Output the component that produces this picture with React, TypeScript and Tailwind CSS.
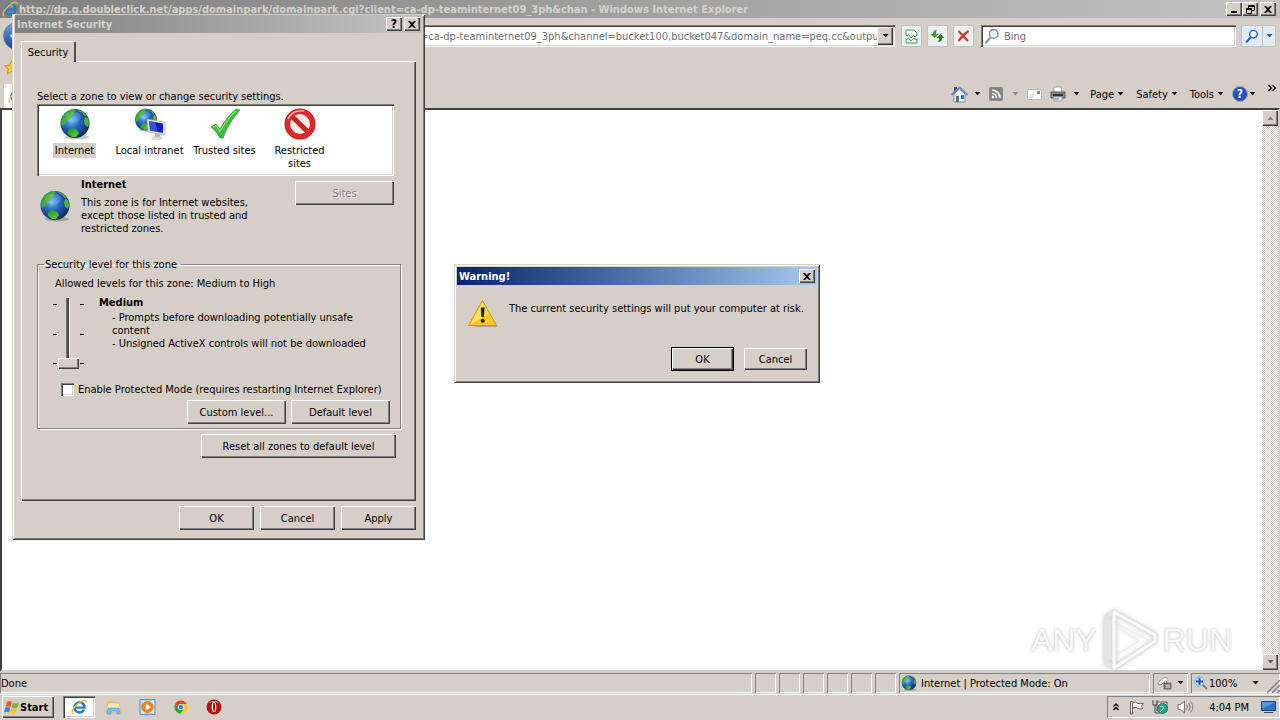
import type { ReactNode } from "react";

const raised =
  "bg-[#d6cfc8] shadow-[inset_1px_1px_0_#fff,inset_-1px_-1px_0_#404040,inset_-2px_-2px_0_#808080]";
const sunken =
  "bg-white shadow-[inset_1px_1px_0_#808080,inset_2px_2px_0_#404040,inset_-1px_-1px_0_#fff,inset_-2px_-2px_0_#d6cfc8]";
const pane = "shadow-[inset_1px_1px_0_#808080,inset_-1px_-1px_0_#fff]";

function Button({ children, className = "", disabled = false }: { children: ReactNode; className?: string; disabled?: boolean }) {
  return (
    <button
      type="button"
      disabled={disabled}
      className={`flex h-6 items-center justify-center disabled:text-[#808080] disabled:[text-shadow:1px_1px_0_#fff] ${raised} ${className}`}
    >
      {children}
    </button>
  );
}

function Caption({ label, children }: { label: string; children: ReactNode }) {
  return (
    <button type="button" aria-label={label} className={`flex h-3.5 w-4 items-center justify-center ${raised}`}>
      {children}
    </button>
  );
}

function CloseGlyph() {
  return (
    <svg width="8" height="7" viewBox="0 0 8 7">
      <path d="M0 0h2l2 2 2-2h2L5 3.5 8 7H6L4 5 2 7H0l3-3.5z" />
    </svg>
  );
}

function Arrow({ className = "" }: { className?: string }) {
  return (
    <svg width="7" height="4" viewBox="0 0 7 4" className={`shrink-0 ${className}`} fill="currentColor">
      <path d="M.5 0h6l-3 3.5z" />
    </svg>
  );
}

function Globe({ className = "" }: { className?: string }) {
  return (
    <svg viewBox="0 0 32 32" className={`shrink-0 ${className}`}>
      <defs>
        <radialGradient id="sea" cx="38%" cy="38%" r="65%">
          <stop offset="0" stopColor="#6fc0f2" />
          <stop offset=".45" stopColor="#2468bd" />
          <stop offset="1" stopColor="#102a68" />
        </radialGradient>
        <linearGradient id="land" x1="0" y1="0" x2="1" y2="1">
          <stop offset="0" stopColor="#1f8f2b" />
          <stop offset="1" stopColor="#6fd13c" />
        </linearGradient>
      </defs>
      <ellipse cx="18" cy="29" rx="12" ry="2.5" fill="#000" opacity=".22" />
      <circle cx="16" cy="15.5" r="14.5" fill="url(#sea)" />
      <path d="M4 8C7 3 11 1 15 1l2 2-3 1 1 2-3 2-1 3-3 1-2 4-3 2-1-4z" fill="url(#land)" />
      <path d="M19 1.5l6 3 3 4-3-1-2-3-3-1zM26 9l3 1 1 5-1 4-3-2-1-4z" fill="#4fb536" />
      <path d="M9 22l4-2 5 2 2 3-3 4-4 0-4-3z" fill="url(#land)" />
      <ellipse cx="14" cy="9" rx="8" ry="5.5" fill="#fff" opacity=".14" />
    </svg>
  );
}

function IntranetIcon() {
  return (
    <div className="relative size-8">
      <Globe className="size-6" />
      <svg viewBox="0 0 20 22" className="absolute right-0 bottom-0 h-[22px] w-5">
        <ellipse cx="11" cy="20" rx="6" ry="2" fill="#d9d7c8" />
        <path d="M9 15h5v4H9z" fill="#bdbbaf" />
        <path d="M1 1l18 3v13L2 14z" fill="#e4e2dc" stroke="#aaa" strokeWidth=".6" />
        <path d="M3 3l14 2.5V15L4 12.500z" fill="#1420b4" />
        <path d="M3 3l6 1 3 10-8-1.500z" fill="#4e7cf0" opacity=".55" />
      </svg>
    </div>
  );
}

function CheckIcon() {
  return (
    <svg viewBox="0 0 32 32" className="size-8">
      <path d="M2 19l5-3 4 5C16 12 22 5 27 1l4 1C24 10 18 19 14 30h-3C9 26 6 22 2 19z" fill="#3dba3f" stroke="#2c9a35" strokeWidth=".7" />
      <path d="M4 19l3-1.500 4 6C17 13 22 7 27 3" fill="none" stroke="#8be37a" strokeWidth="1.200" />
    </svg>
  );
}

function BlockedIcon() {
  return (
    <svg viewBox="0 0 32 32" className="size-8">
      <circle cx="16" cy="16" r="15.500" fill="#a81c20" />
      <circle cx="16" cy="16" r="12.600" fill="none" stroke="#dc2a2e" strokeWidth="4.600" />
      <circle cx="16" cy="16" r="10" fill="#f7e9e7" />
      <path d="M8.500 9l14.500 14" stroke="#c82227" strokeWidth="5" />
      <path d="M4 11C7 4 14 2 20 3" fill="none" stroke="#f3a5a2" strokeWidth="1.500" />
    </svg>
  );
}

function IeIcon({ className = "" }: { className?: string }) {
  return (
    <svg viewBox="0 0 18 18" className={`shrink-0 ${className}`}>
      <path d="M14.600 12A5.700 5.700 0 1 1 15.200 9.700H5" fill="none" stroke="#1e7fd0" strokeWidth="2.800" />
      <path d="M5 8a4.500 4.500 0 0 1 8-1" fill="none" stroke="#8cd0fa" strokeWidth="1" />
      <path d="M2.200 17C-1 15 4 7 11 3c4-2.400 7-2 6 1.200" fill="none" stroke="#f2bd25" strokeWidth="1.500" />
    </svg>
  );
}

function Magnifier({ color, className = "size-4" }: { color: string; className?: string }) {
  return (
    <svg viewBox="0 0 16 16" className={`shrink-0 ${className}`} fill="none" stroke={color}>
      <path d="M2 14.500L6.500 9.500" strokeWidth="2.400" strokeLinecap="round" />
      <circle cx="9.700" cy="5.900" r="4.300" strokeWidth="1.600" fill="#eaf5fc" />
    </svg>
  );
}

function ToolButton({ label, children }: { label: string; children: ReactNode }) {
  return (
    <button
      type="button"
      aria-label={label}
      className="flex h-[22px] w-[21px] items-center justify-center rounded-xs border border-[#b9c1c8] bg-[#edf0f1]"
    >
      {children}
    </button>
  );
}

function BrowserTitle() {
  return (
    <header className="flex h-[18px] shrink-0 items-center gap-px bg-linear-to-r from-[#808080] to-[#c3c3c3] pr-1 pl-0.5">
      <IeIcon className="size-4" />
      <h1 className="grow truncate text-[11px] font-bold text-[#d6d2cb]">
        http://dp.g.doubleclick.net/apps/domainpark/domainpark.cgi?client=ca-dp-teaminternet09_3ph&amp;chan - Windows Internet Explorer
      </h1>
      <div className="flex">
        <Caption label="Minimize">
          <span className="mt-1.5 h-0.5 w-1.5 bg-black" />
        </Caption>
        <Caption label="Restore">
          <svg width="9" height="9" viewBox="0 0 9 9" fill="none" stroke="#000">
            <path d="M2.500 3V.5h6v5H6M2.500 1.500h6M.5 3.500h5v5h-5zM.5 4.500h5" />
          </svg>
        </Caption>
        <div className="ml-0.5 flex">
          <Caption label="Close">
            <CloseGlyph />
          </Caption>
        </div>
      </div>
    </header>
  );
}

function AddressRow() {
  return (
    <div className="flex h-9 shrink-0 items-center pr-1 pl-[3px]">
      <button type="button" aria-label="Back" className="flex size-7 shrink-0 items-center justify-center rounded-full border border-[#5f7fa5] bg-linear-to-b from-[#6fa8e0] to-[#123f92]">
        <svg width="14" height="12" viewBox="0 0 14 12">
          <path d="M6 0v4h8v4H6v4L0 6z" fill="#fff" />
        </svg>
      </button>
      <div className={`ml-8 flex h-[22px] min-w-0 grow items-center p-0.5 ${sunken}`}>
        <input
          aria-label="Address"
          className="min-w-0 grow bg-transparent pl-[22px] text-[11px] text-[#707070] outline-none"
          defaultValue="http://dp.g.doubleclick.net/apps/domainpark/domainpark.cgi?client=ca-dp-teaminternet09_3ph&channel=bucket100,bucket047&domain_name=peq.cc&output=html"
        />
        <button type="button" aria-label="Show address list" className={`flex h-[18px] w-4 items-center justify-center ${raised}`}>
          <Arrow />
        </button>
      </div>
      <div className="ml-1.5 flex gap-[5px]">
        <ToolButton label="Compatibility view">
          <svg width="13" height="15" viewBox="0 0 13 15" fill="none" stroke="#45a352">
            <path d="M1 5.500V1h8l3 3v2.500M1 9.500V14h11V10" fill="#f2faf1" />
            <path d="M1 7l2.500-1.500L6 9l2.500-2.500L10 8l2-2M1 11l2.500-2L6 12l2.500-2.500L12 11" />
          </svg>
        </ToolButton>
        <ToolButton label="Refresh">
          <svg width="15" height="14" viewBox="0 0 15 14" fill="#3c9a32">
            <path d="M7 1C4 1 3 2.500 3 5H.5L4.500 9l4-4H6c0-2 0-2.500 1-4z" />
            <path d="M8 13c3 0 4-1.500 4-4h2.500l-4-4-4 4H9c0 2 0 2.500-1 4z" fill="#237e26" />
          </svg>
        </ToolButton>
        <ToolButton label="Stop">
          <svg width="13" height="12" viewBox="0 0 13 12">
            <path d="M1.500 1L11 11M11.500 1C7 4 4 7 1.500 11" stroke="#cc3a35" strokeWidth="2.200" />
          </svg>
        </ToolButton>
      </div>
      <div className={`ml-[7px] flex h-[22px] w-[255px] items-center gap-1 p-0.5 pl-[3px] ${sunken}`}>
        <Magnifier color="#8a9aa5" />
        <input aria-label="Search" placeholder="Bing" className="min-w-0 grow bg-transparent text-[11px] outline-none placeholder:text-[#707070]" />
      </div>
      <div className="ml-[5px] flex h-[22px] rounded-xs border border-[#b9c1c8] bg-[#e3eaf1] text-[#1560bd]">
        <button type="button" aria-label="Search" className="flex w-[21px] items-center justify-center border-r border-[#b9c1c8]">
          <Magnifier color="#1b62cf" className="size-[14px]" />
        </button>
        <button type="button" aria-label="Search options" className="flex w-3 items-center justify-center">
          <Arrow />
        </button>
      </div>
    </div>
  );
}

function CommandBar() {
  return (
    <div className="flex h-[54px] shrink-0 items-stretch justify-between pl-1">
      <div className="flex flex-col justify-between">
        <svg width="15" height="15" viewBox="0 0 16 16" className="mt-1.5">
          <path d="M8 .8l2.200 4.900 5.200.5-4 3.500 1.200 5.300L8 12.200 3.400 15l1.200-5.300-4-3.500 5.200-.5z" fill="#fbcb34" stroke="#d08d13" />
        </svg>
        <div className="flex h-6 w-32 items-center bg-white pl-1">
          <IeIcon className="size-4" />
        </div>
      </div>
      <nav aria-label="Commands" className="flex h-7 items-center self-end">
        <button type="button" aria-label="Home" className="flex items-center gap-1.5">
          <svg width="17" height="17" viewBox="0 0 17 17">
            <path d="M3 8l5.500-5L14 8v8H3z" fill="#f5f8fd" stroke="#7d8db0" />
            <path d="M3 1h3v5H3z" fill="#3a3a9c" />
            <path d="M.5 9L8.500 1.500l8 7.500" fill="none" stroke="#6f86c9" strokeWidth="2" />
            <path d="M5 10h3v6H5z" fill="#5f6a78" />
            <path d="M10 9h3v4h-3z" fill="#2278cd" />
          </svg>
          <Arrow />
        </button>
        <button type="button" aria-label="Feeds" className="ml-2 flex items-center gap-[9px]">
          <svg width="14" height="14" viewBox="0 0 14 14" fill="none">
            <rect width="14" height="14" rx="2" fill="#858585" />
            <path d="M3 3a8 8 0 0 1 8 8M3 6.500A4.500 4.500 0 0 1 7.500 11" stroke="#fff" strokeWidth="1.700" />
            <circle cx="4" cy="10" r="1.300" fill="#fff" />
          </svg>
          <Arrow className="text-[#8c8c8c]" />
        </button>
        <button type="button" aria-label="Read mail" className="ml-2">
          <svg width="15" height="11" viewBox="0 0 15 11">
            <path d="M.5.5h14v10H.5z" fill="#fff" stroke="#b4b8bd" />
            <path d="M10 2h3v3h-3z" fill="#d85a68" />
            <path d="M3 6h5M3 8h4" stroke="#c3cad4" />
          </svg>
        </button>
        <button type="button" aria-label="Print" className="ml-2 flex items-center gap-[7px]">
          <svg width="16" height="16" viewBox="0 0 16 16">
            <path d="M4 1h7l1 6H4z" fill="#fff" stroke="#a2a2a2" />
            <path d="M1 6h14v6H1z" fill="#85888c" stroke="#55585d" />
            <path d="M3 9h10" stroke="#2e3237" strokeWidth="2" />
            <path d="M4 11h8v4H4z" fill="#e8f0f8" stroke="#9aa3ad" />
            <path d="M5 13h4" stroke="#2278cd" />
          </svg>
          <Arrow />
        </button>
        <div className="ml-2.5 flex gap-3">
          <button type="button" className="flex items-center gap-[3px]">Page <Arrow /></button>
          <button type="button" className="flex items-center gap-[3px]">Safety <Arrow /></button>
          <button type="button" className="flex items-center gap-[3px]">Tools <Arrow /></button>
        </div>
        <button type="button" aria-label="Help" className="ml-2 flex items-center gap-px">
          <span className="flex size-4 items-center justify-center rounded-full border border-[#8f9dc4] bg-[#2450b5] text-[12px] font-bold text-white">?</span>
          <Arrow />
        </button>
        <button type="button" aria-label="More commands" className="mr-1 mb-3 ml-3">
          <svg width="8" height="6" viewBox="0 0 8 6" fill="none" stroke="#000" strokeWidth="1.400">
            <path d="M.5.3L3.300 3 .5 5.700M4.500.3L7.300 3 4.500 5.700" />
          </svg>
        </button>
      </nav>
    </div>
  );
}

function ScrollBar() {
  return (
    <div className="flex w-4 flex-col justify-between bg-[repeating-conic-gradient(#fff_0_25%,#d6cfc8_0_50%)] bg-[length:2px_2px]">
      <button type="button" aria-label="Scroll up" className={`flex h-4 items-center justify-center ${raised}`}>
        <Arrow className="rotate-180 text-[#808080]" />
      </button>
      <button type="button" aria-label="Scroll down" className={`flex h-4 items-center justify-center ${raised}`}>
        <Arrow className="text-[#606060]" />
      </button>
    </div>
  );
}

function Watermark() {
  return (
    <div className="absolute right-12 bottom-12 flex items-center gap-0.5 font-['Liberation_Sans_Narrow','Liberation_Sans',sans-serif] text-[32px] leading-none text-[#f8f8f8] [text-shadow:0_0_2px_#bbb,0_0_4px_#ddd]">
      <span>ANY</span>
      <svg width="62" height="64" viewBox="0 0 62 64" fill="none" className="drop-shadow-[0_0_2px_#ccc]" strokeLinejoin="round">
        <path d="M7 9v46l6 3M7 9l6-4" stroke="#e4e4e4" strokeWidth="5" />
        <path d="M15 4l41 23v6L15 60z" stroke="#dedede" strokeWidth="5" />
        <path d="M15 4l41 23v6L15 60z" stroke="#fafafa" strokeWidth="3" />
        <path d="M15 14l38 20M17 19v28l23-14z" stroke="#e8e8e8" />
      </svg>
      <span>RUN</span>
    </div>
  );
}

function StatusBar() {
  return (
    <footer className="mt-0.5 flex h-5 shrink-0 items-stretch gap-[3px]">
      <p className={`flex grow items-center pl-px ${pane}`}>Done</p>
      {[0, 1, 2, 3, 4, 5].map((n) => (
        <span key={n} className={`w-[21px] ${pane}`} />
      ))}
      <p className={`flex w-[251px] items-center gap-1 pl-0.5 ${pane}`}>
        <Globe className="size-4" />
        Internet | Protected Mode: On
      </p>
      <button type="button" aria-label="Blocked content" className={`flex w-[35px] items-center justify-center gap-[5px] ${pane}`}>
        <svg width="15" height="14" viewBox="0 0 15 14">
          <path d="M1 8c2-5 6-7 9-6l1 3-4 1-3 3z" fill="#f5f5f5" stroke="#999" />
          <path d="M7 7h7v6H7z" fill="#8a8a8a" stroke="#666" />
          <path d="M8.500 7V5c0-2 4-2 4 0v2M10 9v3M12 9v3" fill="none" stroke="#e0e0e0" />
        </svg>
        <Arrow />
      </button>
      <button type="button" aria-label="Zoom level" className={`flex w-[89px] items-center pl-[3px] ${pane}`}>
        <svg width="14" height="14" viewBox="0 0 14 14" fill="none">
          <path d="M8.500 8.500l4.500 4.500" stroke="#8a7a60" strokeWidth="2" />
          <circle cx="5.500" cy="5.500" r="4.600" fill="#d2e8fb" stroke="#6fa6dc" />
          <path d="M5.500 2v7M2 5.500h7" stroke="#1b55b5" strokeWidth="2" />
        </svg>
        <span className="ml-px grow text-left">100%</span>
        <Arrow />
        <svg width="13" height="13" viewBox="0 0 13 13" className="ml-2 self-end" stroke="#808080">
          <path d="M0 13L13 0M5 13l8-8M10 13l3-3" strokeWidth="1.500" />
        </svg>
      </button>
    </footer>
  );
}

function TaskBar() {
  return (
    <footer className="mt-px flex h-[26px] shrink-0 items-center border-t border-white pt-px pb-0.5 pl-0.5">
      <button type="button" className={`flex h-[22px] w-[52px] items-center pl-0.5 text-[11px] font-bold ${raised}`}>
        <svg width="16" height="15" viewBox="0 0 16 15">
          <path d="M3 2c2-1.500 3-1 5 0L6.500 7c-2-1-3-1-5 0z" fill="#ee5a24" />
          <path d="M9 2.500c2 1 3 1 6 0L13.500 7.500c-2 1-4 1-6 0z" fill="#76b82f" />
          <path d="M1.200 8c2-1.500 3-1 5 0L5 12.500c-2-1-3-1-5 0z" fill="#2f86d6" />
          <path d="M7.200 8.500c2 1 4 1 6 0L12 13c-2 1-4 1-6 0z" fill="#fbc224" />
        </svg>
        Start
      </button>
      <nav aria-label="Pinned programs" className="ml-[9px] flex grow items-center">
        <button type="button" aria-label="Internet Explorer" className={`flex h-[22px] w-8 items-center justify-center ${sunken}`}>
          <IeIcon className="size-4" />
        </button>
        <div className="ml-2.5 flex items-center gap-[17px]">
          <button type="button" aria-label="File Explorer">
            <svg width="17" height="16" viewBox="0 0 17 16">
              <path d="M2 2h5l1 1.500h6V12H2z" fill="#eac766" />
              <path d="M3 4h11l2 9H1z" fill="#fbeaa6" stroke="#d8b55a" strokeWidth=".6" />
              <path d="M3 9h11l1 6h-3v-3H6v3H2z" fill="#79bde8" stroke="#4f93c4" strokeWidth=".6" />
            </svg>
          </button>
          <button type="button" aria-label="Media Player">
            <svg width="17" height="16" viewBox="0 0 17 16">
              <path d="M1 .5h15v15H1z" fill="#bcd9f4" stroke="#5a8fc7" />
              <path d="M4 2h11v12H4z" fill="#e2effa" />
              <circle cx="8.500" cy="8" r="5.700" fill="#f08418" stroke="#d0650f" strokeWidth=".6" />
              <path d="M6.800 4.800v6.400L12 8z" fill="#fff" />
            </svg>
          </button>
          <button type="button" aria-label="Chrome">
            <svg width="16" height="14" viewBox="0 0 16 16">
              <circle cx="8" cy="8" r="7.500" fill="#f9c71c" />
              <path d="M8 .5A7.500 7.500 0 0 1 14.500 4.500H8L4.900 9.800 1.500 4.200A7.500 7.500 0 0 1 8 .5z" fill="#dd4433" />
              <path d="M1.500 4.200A7.500 7.500 0 0 0 7.800 15.500L11 10 4.900 9.800z" fill="#2e9e4f" />
              <circle cx="8" cy="8" r="3.500" fill="#fff" />
              <circle cx="8" cy="8" r="2.700" fill="#3f7ee8" />
            </svg>
          </button>
          <button type="button" aria-label="Opera">
            <svg width="16" height="16" viewBox="0 0 16 16">
              <circle cx="8" cy="8" r="7.500" fill="#b5121b" />
              <path d="M3 4C5 1 11 1 13 4c-3-1-7-1-10 0z" fill="#e8737a" />
              <ellipse cx="8" cy="8" rx="2.300" ry="5" fill="#fff" />
              <ellipse cx="8" cy="8" rx="1" ry="4.200" fill="#9c0f17" />
            </svg>
          </button>
        </div>
      </nav>
      <div className={`flex h-[22px] items-center pr-1 pl-1.5 ${pane}`}>
        <button type="button" aria-label="Show hidden icons">
          <svg width="6" height="8" viewBox="0 0 6 8" fill="none" stroke="#000" strokeWidth="1.300">
            <path d="M.5 3.500L3 1l2.500 2.500M.5 7L3 4.500 5.500 7" />
          </svg>
        </button>
        <svg width="16" height="15" viewBox="0 0 16 15" className="ml-[10px]" fill="#fff" stroke="#666">
          <path d="M1.500 1.500h2V14h-2z" />
          <path d="M3.500 2.500c3-1 4 0 5 1h6l-2 2.500 1 2.500c-3 1-5 0-6-1h-4z" />
        </svg>
        <svg width="17" height="16" viewBox="0 0 17 16" className="ml-[7px]">
          <path d="M5 3h10v9H5z" fill="#eee" stroke="#555" />
          <path d="M1 1v5h4V1M3 6v8h5" fill="none" stroke="#444" />
          <circle cx="10.500" cy="9.500" r="5" fill="#27a589" stroke="#157a66" />
          <path d="M8 8c2-2 4 0 3 2s-2 1-3 3" fill="none" stroke="#b5f0dc" />
        </svg>
        <svg width="17" height="16" viewBox="0 0 17 16" className="ml-2" fill="none" stroke="#777">
          <path d="M1 5.500h2.500L7.500 2v12L3.500 10.500H1z" fill="#fff" />
          <path d="M9.500 5.500c1 1.500 1 3.500 0 5M11.500 4c2 2.500 2 5.500 0 8M13.500 2.500c3 3.500 3 7.500 0 11" />
        </svg>
        <time className="ml-[15px]">4:04 PM</time>
        <svg width="15" height="14" viewBox="0 0 15 14" className="ml-[12px]">
          <path d="M.5 1.500h14v9H.5z" fill="#2c72cc" stroke="#17427d" />
          <path d="M1 2h13L3 8H1z" fill="#76aff0" opacity=".6" />
          <path d="M3 12.500h9" stroke="#444" />
        </svg>
      </div>
    </footer>
  );
}

const zones = [
  { name: "Internet", icon: <Globe className="size-8" />, selected: true },
  { name: "Local intranet", icon: <IntranetIcon /> },
  { name: "Trusted sites", icon: <CheckIcon /> },
  { name: "Restricted sites", icon: <BlockedIcon /> },
];

function Ticks() {
  return (
    <span className="flex h-[60px] flex-col justify-between">
      <span className="h-px w-1 bg-black" />
      <span className="h-px w-1 bg-black" />
      <span className="h-px w-1 bg-black" />
    </span>
  );
}

function SecurityDialog() {
  return (
    <section
      role="dialog"
      aria-labelledby="security-title"
      className="absolute top-3.5 left-3 flex w-[413px] flex-col bg-[#d6cfc8] p-[3px] pt-px pb-2.5 shadow-[inset_1px_1px_0_#d6cfc8,inset_-1px_-1px_0_#404040,inset_2px_2px_0_#fff,inset_-2px_-2px_0_#808080]"
    >
      <header className="flex h-[18px] items-center gap-0.5 bg-linear-to-r from-[#808080] to-[#c3c3c3] pr-0.5 pl-0.5">
        <h2 id="security-title" className="grow font-bold text-[#d6d2cb]">Internet Security</h2>
        <Caption label="Help">
          <span className="text-[12px] font-bold">?</span>
        </Caption>
        <Caption label="Close">
          <CloseGlyph />
        </Caption>
      </header>
      <div className="flex flex-col px-1.5 pt-2">
        <div role="tablist" className="flex">
          <button
            type="button"
            role="tab"
            aria-selected="true"
            className="z-10 -mb-px flex h-[21px] w-[55px] items-center justify-center rounded-t-xs border-t border-r-2 border-l border-t-white border-r-[#505050] border-l-white bg-[#d6cfc8]"
          >
            Security
          </button>
        </div>
        <div role="tabpanel" className="flex h-[440px] flex-col px-4 pt-[29px] shadow-[inset_1px_1px_0_#fff,inset_-1px_-1px_0_#404040,inset_-2px_-2px_0_#808080]">
          <p>Select a zone to view or change security settings.</p>
          <ul className={`mt-px flex h-[72px] w-[357px] pt-1 ${sunken}`}>
            {zones.map((zone) => (
              <li key={zone.name} className="w-[75px]">
                <button type="button" className="flex w-full flex-col items-center gap-[3px]">
                  {zone.icon}
                  <span className={zone.selected ? "bg-[#d6cfc8] px-0.5 py-px" : "py-px"}>{zone.name}</span>
                </button>
              </li>
            ))}
          </ul>
          <div className="flex w-[357px] items-start pt-0.5">
            <Globe className="mt-3 ml-0.5 size-8" />
            <div className="ml-2.5 w-[180px]">
              <h3 className="font-bold">Internet</h3>
              <p className="mt-[5px]">This zone is for Internet websites, except those listed in trusted and restricted zones.</p>
            </div>
            <Button disabled className="mt-[3px] ml-auto w-[99px]">Sites</Button>
          </div>
          <fieldset className="mt-[23px] w-[364px] border border-[#808080] pb-1 pl-3.5 shadow-[1px_1px_0_#fff,inset_1px_1px_0_#fff]">
            <legend className="-ml-2 pr-1 pl-px">Security level for this zone</legend>
            <p className="mt-1.5 pl-[3px]">Allowed levels for this zone: Medium to High</p>
            <div className="mt-1.5 flex pl-px">
              <div className="flex h-[76px] items-start gap-px pt-2">
                <Ticks />
                <input
                  type="range"
                  aria-label="Security level"
                  min={0}
                  max={2}
                  defaultValue={2}
                  className="-mt-1.5 h-[71px] w-[21px] appearance-none bg-transparent [writing-mode:vertical-lr] [&::-webkit-slider-runnable-track]:h-full [&::-webkit-slider-runnable-track]:bg-[linear-gradient(to_right,transparent_8px,#808080_8px,#404040_10px,#404040_11px,#fff_11px,#fff_12px,transparent_12px)] [&::-webkit-slider-thumb]:h-[11px] [&::-webkit-slider-thumb]:w-[21px] [&::-webkit-slider-thumb]:appearance-none [&::-webkit-slider-thumb]:bg-[#d6cfc8] [&::-webkit-slider-thumb]:shadow-[inset_1px_1px_0_#fff,inset_-1px_-1px_0_#404040,inset_-2px_-2px_0_#808080]"
                />
                <Ticks />
              </div>
              <div className="ml-[15px]">
                <h3 className="font-bold">Medium</h3>
                <ul className="mt-0.5 w-[276px] pl-[13px]">
                  <li>- Prompts before downloading potentially unsafe content</li>
                  <li>- Unsigned ActiveX controls will not be downloaded</li>
                </ul>
              </div>
            </div>
            <label className="mt-[11px] flex items-center gap-1 pl-[9px]">
              <input type="checkbox" className={`size-[13px] appearance-none ${sunken}`} />
              Enable Protected Mode (requires restarting Internet Explorer)
            </label>
            <div className="mt-1 flex justify-end gap-[5px] pr-2.5">
              <Button className="w-[99px]">Custom level...</Button>
              <Button className="w-[99px]">Default level</Button>
            </div>
          </fieldset>
          <div className="mt-[5px] flex justify-end pr-1">
            <Button className="w-[195px]">Reset all zones to default level</Button>
          </div>
        </div>
        <div className="mt-[5px] flex justify-end gap-1.5">
          <Button className="w-[75px]">OK</Button>
          <Button className="w-[75px]">Cancel</Button>
          <Button className="w-[75px]">Apply</Button>
        </div>
      </div>
    </section>
  );
}

function WarningDialog() {
  return (
    <section
      role="alertdialog"
      aria-labelledby="warning-title"
      className="absolute top-66 left-[454px] flex w-[366px] flex-col bg-[#d6cfc8] p-[3px] pb-3 shadow-[inset_1px_1px_0_#d6cfc8,inset_-1px_-1px_0_#404040,inset_2px_2px_0_#fff,inset_-2px_-2px_0_#808080]"
    >
      <header className="flex h-[18px] items-center bg-linear-to-r from-[#0a246a] to-[#a6caf0] pr-0.5 pl-0.5">
        <h2 id="warning-title" className="grow font-bold text-white">Warning!</h2>
        <Caption label="Close">
          <CloseGlyph />
        </Caption>
      </header>
      <div className="flex gap-2.5 px-2.5 pt-3.5">
        <svg width="32" height="30" viewBox="0 0 32 30">
          <path d="M4 28h27l-3-4z" fill="#777" opacity=".5" />
          <path d="M15.500 1.500L29.500 26.500h-28z" fill="#f7c81d" stroke="#c99a15" strokeLinejoin="round" />
          <path d="M15.500 3L22 15 3 25.500z" fill="#fff3a0" opacity=".5" />
          <path d="M13.700 8.500h4l-.8 9.500h-2.400z" fill="#222" />
          <circle cx="15.700" cy="21.800" r="2" fill="#222" />
        </svg>
        <p className="mt-[3px]">The current security settings will put your computer at risk.</p>
      </div>
      <div className="mt-[18px] flex items-center justify-end gap-2.5 pr-2.5">
        <button type="button" className={`h-6 w-[63px] border border-black ${raised}`}>OK</button>
        <button type="button" className={`h-[22px] w-[63px] ${raised}`}>Cancel</button>
      </div>
    </section>
  );
}

export default function App() {
  return (
    <div className="relative flex h-screen flex-col overflow-hidden bg-[#d6cfc8] font-['DejaVu_Sans_Condensed','DejaVu_Sans',sans-serif] text-[11px] leading-[13px] text-black">
      <BrowserTitle />
      <AddressRow />
      <CommandBar />
      <main className="flex min-h-0 grow justify-end border-t-2 border-r-2 border-b border-l-2 border-t-[#404040] border-r-[#d6cfc8] border-b-[#d6cfc8] border-l-[#404040] bg-white">
        <ScrollBar />
      </main>
      <StatusBar />
      <TaskBar />
      <Watermark />
      <SecurityDialog />
      <WarningDialog />
    </div>
  );
}
